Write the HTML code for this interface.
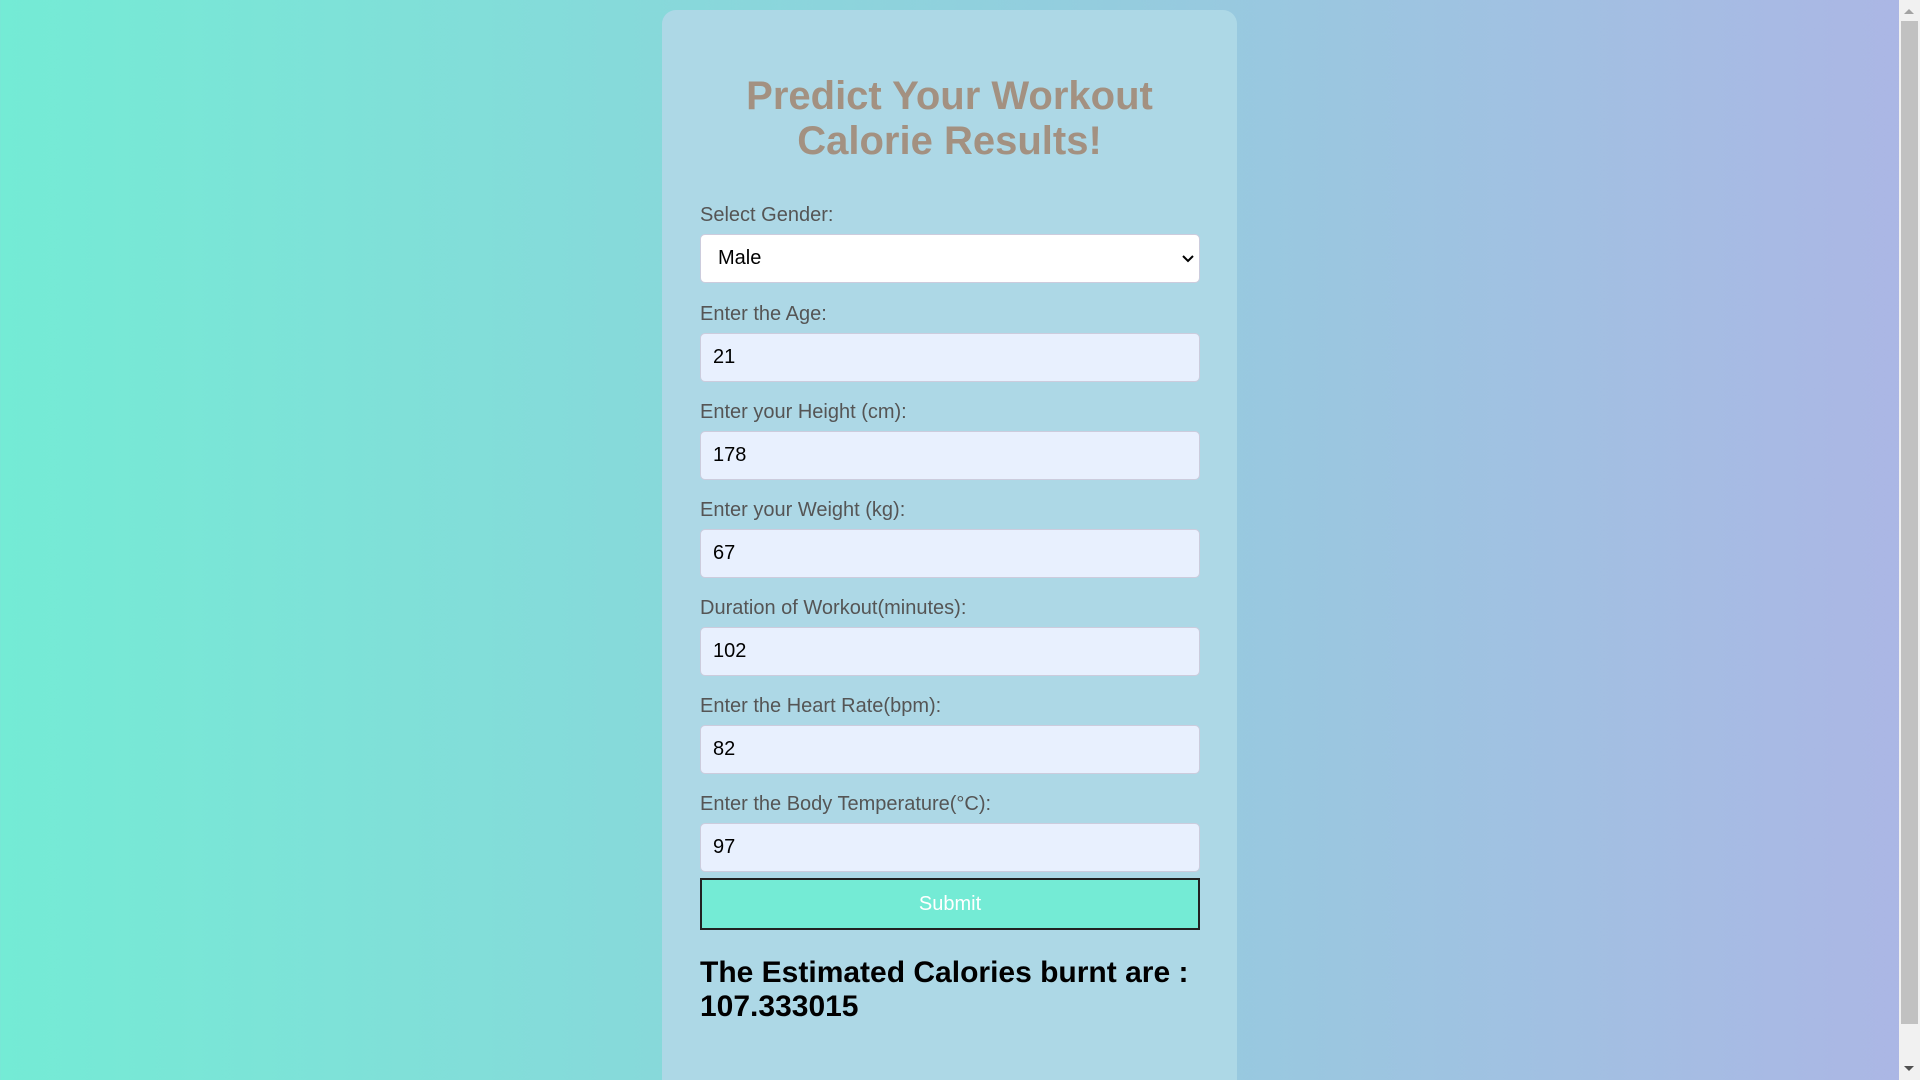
<!DOCTYPE html>
<html><head><meta charset="utf-8"><style>
html,body{margin:0;padding:0;width:1920px;height:1080px;overflow:hidden;font-family:"Liberation Sans",Arial,sans-serif;}
body{background:linear-gradient(to right,#74ebd5,#acb6e5);position:relative;}
.sb{position:absolute;left:1899px;top:0;width:21px;height:1080px;background:#f1f1f1;}
.thumb{position:absolute;left:2px;top:21px;width:17px;height:1003px;background:#c1c1c1;}
.up{position:absolute;left:5px;top:9px;width:0;height:0;border-left:5px solid transparent;border-right:5px solid transparent;border-bottom:5px solid #a3a3a3;}
.dn{position:absolute;left:5px;top:1066px;width:0;height:0;border-left:5px solid transparent;border-right:5px solid transparent;border-top:5px solid #505050;}
.card{position:absolute;left:662px;top:10px;width:575px;height:1090px;background:#add8e6;border-radius:14px;}
h1{position:absolute;left:0;top:64px;width:575px;margin:0;text-align:center;font-size:40px;line-height:45px;color:#a39181;font-weight:bold;}
.lbl{position:absolute;left:38px;font-size:20px;color:#555;}
.in{position:absolute;left:38px;background:#e8f0fe;border:1px solid #ccd;border-radius:5px;box-sizing:border-box;width:500px;height:49px;font-size:20px;color:#000;line-height:47px;padding-left:12px;}
.sel{background:#fff;padding-left:17px;}
.chev{position:absolute;right:4px;top:14px;}
.btn{position:absolute;left:38px;top:868px;width:500px;height:52px;box-sizing:border-box;border:2px solid #222;background:#74ebd5;color:#fff;font-size:20px;text-align:center;line-height:48px;}
.res{position:absolute;left:38px;top:946px;font-size:30px;font-weight:bold;line-height:34px;color:#000;}
</style></head><body>
<div class="card">
<h1>Predict Your Workout<br>Calorie Results!</h1>
<div class="lbl" style="top:194px">Select Gender:</div>
<div class="in sel" style="top:224px">Male<svg class="chev" width="14" height="20" viewBox="0 0 14 20"><path d="M2 7 L7 12 L12 7" fill="none" stroke="#000" stroke-width="2"/></svg></div>
<div class="lbl" style="top:293px">Enter the Age:</div>
<div class="in" style="top:323px">21</div>
<div class="lbl" style="top:391px">Enter your Height (cm):</div>
<div class="in" style="top:421px">178</div>
<div class="lbl" style="top:489px">Enter your Weight (kg):</div>
<div class="in" style="top:519px">67</div>
<div class="lbl" style="top:587px">Duration of Workout(minutes):</div>
<div class="in" style="top:617px">102</div>
<div class="lbl" style="top:685px">Enter the Heart Rate(bpm):</div>
<div class="in" style="top:715px">82</div>
<div class="lbl" style="top:783px">Enter the Body Temperature(°C):</div>
<div class="in" style="top:813px">97</div>
<div class="btn">Submit</div>
<div class="res">The Estimated Calories burnt are :<br>107.333015</div>
</div>
<div class="sb"><div class="up"></div><div class="thumb"></div><div class="dn"></div></div>
</body></html>
